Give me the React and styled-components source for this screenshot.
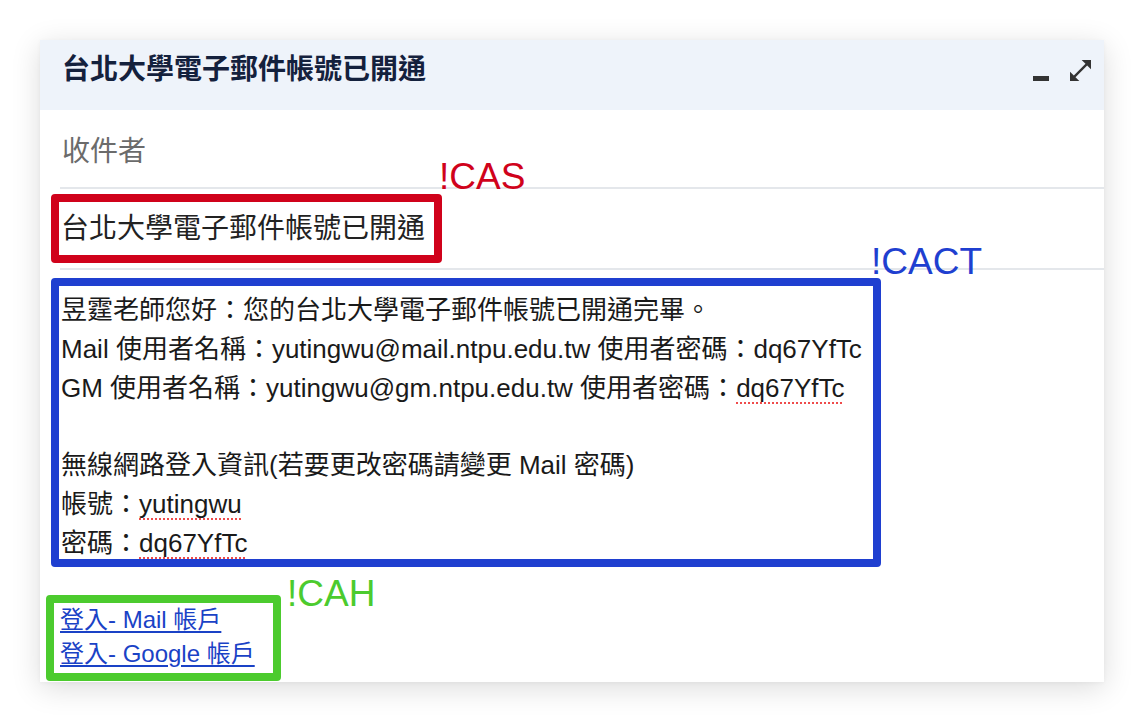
import React from 'react';
import styled, { createGlobalStyle } from 'styled-components';

const GlobalStyle = createGlobalStyle`
    body {
        margin: 0;
        background: #ffffff;
        font-family: 'Liberation Sans', 'Noto Sans CJK TC', sans-serif;
    }
`

const Page = styled.div`
    padding: 40px 0 0 40px;
    height: 722px;
    box-sizing: border-box;
`

const Card = styled.div`
    width: 1064px;
    height: 642px;
    background: #ffffff;
    box-shadow: 0 6px 28px rgba(0, 0, 0, 0.14), 0 1px 4px rgba(0, 0, 0, 0.04);
    display: flex;
    flex-direction: column;
`

const Header = styled.div`
    height: 70px;
    box-sizing: border-box;
    background: #eef3fa;
    display: flex;
    align-items: center;
    justify-content: space-between;
    padding: 0 13px 10px 22px;
`

const Title = styled.h1`
    margin: 0;
    font-size: 28px;
    line-height: 28px;
    font-weight: bold;
    color: #14213d;
`

const Controls = styled.div`
    display: flex;
    align-items: flex-end;
    gap: 21px;
    height: 21px;
`

const Minimize = styled.span`
    display: block;
    width: 16px;
    height: 5px;
    background: #333333;
`

const Recipient = styled.div`
    height: 77px;
    display: flex;
    align-items: center;
    padding-left: 22px;
    font-size: 28px;
    color: #6b6b6b;
`

const Rule = styled.div`
    height: 2px;
    margin-left: 20px;
    background: #e4e7eb;
`

// annotation frame, the tag is placed from the frame's inner (padding) edge
const Box = styled.div`
    position: relative;
    box-sizing: border-box;
    width: ${p => p.$w}px;
    height: ${p => p.$h}px;
    margin: ${p => p.$mt}px 0 ${p => p.$mb}px ${p => p.$ml}px;
    border: 8px solid ${p => p.$color};
    border-radius: 4px;
    padding: ${p => p.$pad};
`

const SubjectBox = styled(Box)`
    display: flex;
    align-items: center;
`

const Tag = styled.span`
    position: absolute;
    top: ${p => p.$top}px;
    left: calc(100% + ${p => p.$left}px);
    font-size: 37px;
    line-height: 37px;
    color: ${p => p.$color};
    white-space: nowrap;
`

const Subject = styled.div`
    font-size: 28px;
    line-height: 37px;
    color: #222222;
`

const Message = styled.div`
    font-size: 26px;
    line-height: 38.8px;
    color: #1a1a1a;
    white-space: nowrap;
`

const Line = styled.div`
    min-height: 38.8px;
`

const Misspelt = styled.span`
    text-decoration: underline dotted #ef4b4b;
    text-decoration-thickness: 2px;
    text-underline-offset: 6px;
`

const Links = styled.div`
    display: flex;
    flex-direction: column;
    font-size: 24px;
    line-height: 33.5px;
`

const MailLink = styled.a`
    color: #1a42c6;
    text-decoration: underline;
    text-underline-offset: 3px;
    white-space: nowrap;
`

const ExpandIcon = () => (
    <svg width="21" height="21" viewBox="3 3 18 18">
        <path fill="#333333" d="M21 11V3h-8l3.29 3.29-10 10L3 13v8h8l-3.29-3.29 10-10z" />
    </svg>
)

const RED = '#d0021b'
const BLUE = '#1f3fd0'
const GREEN = '#4ccb2e'

class App extends React.Component {
    render() {
        return (
            <Page>
                <GlobalStyle />
                <Card>
                    <Header>
                        <Title>台北大學電子郵件帳號已開通</Title>
                        <Controls>
                            <Minimize />
                            <ExpandIcon />
                        </Controls>
                    </Header>

                    <Recipient>收件者</Recipient>
                    <Rule />

                    <SubjectBox $color={RED} $w={391} $h={69} $mt={5} $mb={5} $ml={11} $pad="0 0 0 2px">
                        <Subject>台北大學電子郵件帳號已開通</Subject>
                        <Tag $color={RED} $top={-44} $left={5}>!CAS</Tag>
                    </SubjectBox>
                    <Rule />

                    <Box $color={BLUE} $w={830} $h={289} $mt={8} $mb={28} $ml={11} $pad="5px 0 0 2px">
                        <Message>
                            <Line>昱霆老師您好：您的台北大學電子郵件帳號已開通完畢。</Line>
                            <Line>Mail 使用者名稱：yutingwu@mail.ntpu.edu.tw 使用者密碼：dq67YfTc</Line>
                            <Line>GM 使用者名稱：yutingwu@gm.ntpu.edu.tw 使用者密碼：<Misspelt>dq67YfTc</Misspelt></Line>
                            <Line />
                            <Line>無線網路登入資訊(若要更改密碼請變更 Mail 密碼)</Line>
                            <Line>帳號：<Misspelt>yutingwu</Misspelt></Line>
                            <Line>密碼：<Misspelt>dq67YfTc</Misspelt></Line>
                        </Message>
                        <Tag $color={BLUE} $top={-43} $left={-2}>!CACT</Tag>
                    </Box>

                    <Box $color={GREEN} $w={235} $h={86} $mt={0} $mb={0} $ml={6} $pad="0 0 0 6px">
                        <Links>
                            <MailLink href="#">登入- Mail 帳戶</MailLink>
                            <MailLink href="#">登入- Google 帳戶</MailLink>
                        </Links>
                        <Tag $color={GREEN} $top={-28} $left={14}>!CAH</Tag>
                    </Box>
                </Card>
            </Page>
        );
    }
}

export default App;
